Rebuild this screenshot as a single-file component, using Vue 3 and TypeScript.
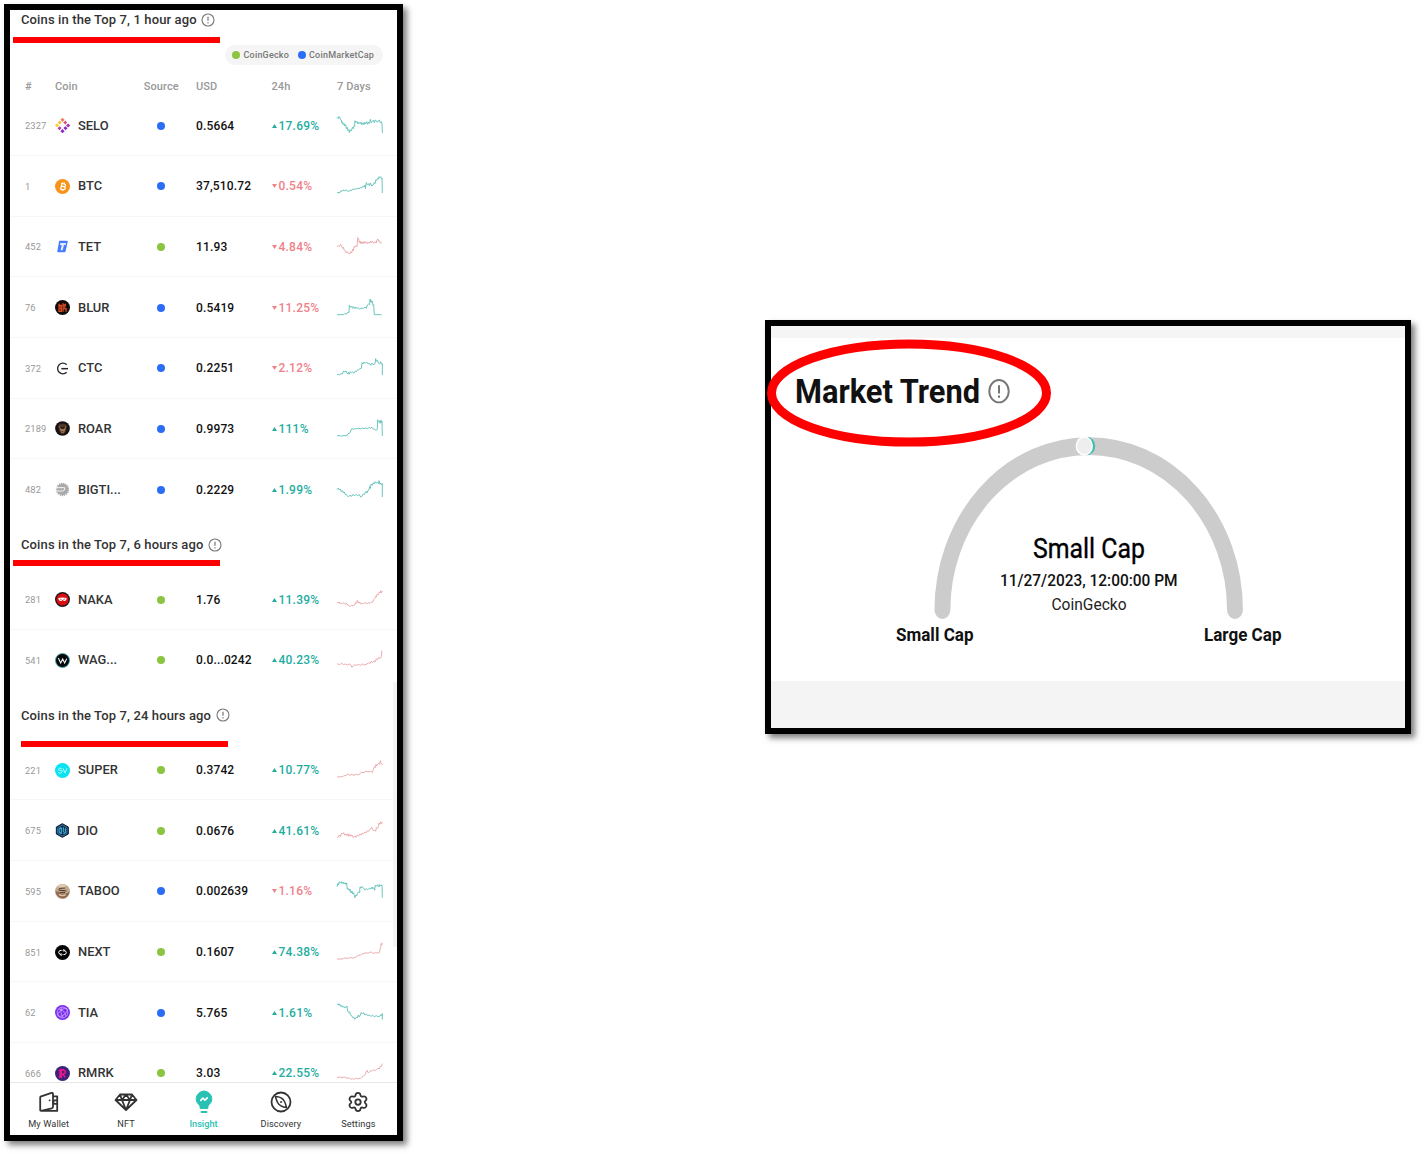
<script setup lang="ts">
interface Coin {
  rank: number
  name: string
  source: 'gecko' | 'cmc'
  usd: string
  change: string
  up: boolean
  trend: 'green' | 'red'
  points: string
}
interface Section {
  title: string
  coins: Coin[]
}

const coin = (
  rank: number, name: string, source: 'gecko' | 'cmc', usd: string, change: string,
  up: boolean, trend: 'green' | 'red', points: string,
): Coin => ({ rank, name, source, usd, change, up, trend, points })

const sections: Section[] = [
  {
    title: 'Coins in the Top 7, 1 hour ago',
    coins: [
      coin(2327, 'SELO', 'cmc', '0.5664', '17.69%', true, 'green', '0,4 3,8 5,2 8,3 10,10 13,12 14,20 17,18 18,26 21,22 23,30 26,26 28,38 31,34 33,44 36,40 37,50 40,42 43,45 46,34 49,38 51,29 53,31 54,14 57,20 60,16 63,24 66,19 69,23 72,18 75,26 78,20 81,26 83,19 86,24 89,17 92,25 95,18 98,22 100,10 103,20 106,17 109,13 112,20 114,12 118,14 121,19 124,14 127,12 130,20 133,17 135,24 136,51'),
      coin(1, 'BTC', 'cmc', '37,510.72', '0.54%', false, 'green', '0,50 9,50 12,44 15,46 18,42 23,44 28,42 33,46 38,45 40,42 45,43 48,39 55,40 60,37 66,38 70,35 74,36 77,31 82,32 84,27 85,38 88,20 91,26 94,23 97,29 100,21 104,30 108,27 112,20 114,23 116,12 119,14 121,7 124,9 126,2 128,5 131,2 133,8 135,6 136,51'),
      coin(452, 'TET', 'gecko', '11.93', '4.84%', false, 'red', '0,29 4,26 7,29 11,22 14,27 17,34 19,31 22,40 26,42 28,48 31,44 34,49 38,51 41,44 44,48 47,36 49,41 51,29 54,31 57,26 60,29 62,2 65,5 67,17 69,12 72,21 75,14 78,20 81,13 84,19 88,14 91,20 94,15 97,19 100,13 103,18 106,12 109,17 112,19 115,14 118,18 120,8 123,6 125,13 128,12 130,19 134,17'),
      coin(76, 'BLUR', 'cmc', '0.5419', '11.25%', false, 'green', '0,50 20,50 23,47 29,48 31,44 36,43 37,22 40,28 44,24 47,31 50,26 54,32 57,27 60,31 64,30 68,33 75,30 80,31 84,27 88,31 91,21 95,18 98,20 99,3 101,11 103,8 104,14 106,10 108,22 110,20 112,50 134,50'),
      coin(372, 'CTC', 'cmc', '0.2251', '2.12%', false, 'green', '0,51 4,48 7,51 12,47 16,48 20,39 24,42 27,39 31,47 34,43 36,49 40,41 43,45 47,42 51,46 55,39 58,41 61,36 65,35 69,32 73,31 75,14 78,18 81,12 85,16 89,12 94,18 98,17 101,22 104,15 108,20 111,19 114,17 116,2 118,10 121,7 124,15 128,18 131,11 134,18 136,17 136,51'),
      coin(2189, 'ROAR', 'cmc', '0.9973', '111%', true, 'green', '0,50 10,50 14,52 18,50 30,50 33,44 38,43 41,36 44,29 50,31 54,28 60,30 65,27 70,30 75,27 81,29 86,27 92,29 97,25 101,28 104,24 107,29 112,31 118,34 121,30 122,2 125,8 127,6 129,13 132,3 134,11 135,8 136,51'),
      coin(482, 'BIGTI...', 'cmc', '0.2229', '1.99%', true, 'green', '0,29 4,24 7,30 10,27 13,35 17,32 19,39 22,36 25,44 28,43 30,47 34,50 39,46 44,49 48,43 53,48 58,43 62,47 67,44 71,51 75,49 79,42 83,43 85,36 88,34 90,39 93,31 96,30 98,20 100,25 102,12 106,16 109,8 112,12 115,5 119,10 122,7 125,11 126,2 129,13 131,9 134,14 136,11 136,51'),
    ],
  },
  {
    title: 'Coins in the Top 7, 6 hours ago',
    coins: [
      coin(281, 'NAKA', 'gecko', '1.76', '11.39%', true, 'red', '0,36 4,39 7,36 9,41 12,38 16,42 21,38 25,43 29,40 32,45 36,46 39,50 43,46 48,47 53,45 56,37 59,40 61,31 64,38 68,36 70,42 75,39 80,42 85,37 89,42 94,38 99,40 103,36 107,37 110,29 113,26 115,20 118,21 120,13 124,14 127,6 129,9 131,2 133,9 136,3'),
      coin(541, 'WAG...', 'gecko', '0.0...0242', '40.23%', true, 'red', '0,41 7,44 14,40 19,44 25,42 31,45 37,42 41,44 44,51 49,49 53,44 58,46 64,43 70,46 77,42 83,45 90,42 95,38 99,41 102,34 107,37 111,33 115,35 118,26 122,29 125,22 130,25 133,20 134,3 136,2'),
    ],
  },
  {
    title: 'Coins in the Top 7, 24 hours ago',
    coins: [
      coin(221, 'SUPER', 'gecko', '0.3742', '10.77%', true, 'red', '0,51 16,50 20,48 27,46 33,42 38,46 44,43 50,46 58,43 63,45 68,41 74,37 81,38 87,33 93,36 100,34 106,37 109,29 112,20 115,23 117,13 119,18 122,13 126,9 128,13 130,2 132,8 134,10 136,15'),
      coin(675, 'DIO', 'gecko', '0.0676', '41.61%', true, 'red', '0,51 4,48 7,42 10,47 14,36 17,39 20,35 24,43 27,39 30,44 33,38 35,46 39,40 42,46 45,42 49,50 53,45 58,49 61,42 65,45 69,39 73,42 76,36 80,38 84,33 88,35 91,29 95,31 98,26 101,24 104,19 107,25 110,30 113,27 116,31 118,20 121,22 124,17 126,6 128,10 131,2 133,9 136,4'),
      coin(595, 'TABOO', 'cmc', '0.002639', '1.16%', false, 'green', '0,17 3,7 5,12 7,2 10,5 13,2 15,8 18,3 21,9 24,5 27,10 29,6 31,25 34,22 37,29 39,24 42,36 45,30 47,39 50,35 52,44 54,50 56,42 59,45 62,35 65,33 68,35 69,18 73,21 75,16 79,20 83,27 88,23 92,26 97,22 102,24 105,18 107,23 110,20 113,28 115,12 119,16 122,11 126,18 128,11 132,14 135,12 136,50'),
      coin(851, 'NEXT', 'gecko', '0.1607', '74.38%', true, 'red', '0,51 16,51 22,48 33,49 38,47 50,48 57,45 61,43 65,39 70,40 74,36 81,35 87,32 93,34 99,30 104,31 109,34 116,32 122,33 127,32 129,22 131,16 132,5 134,9 136,2'),
      coin(62, 'TIA', 'cmc', '5.765', '1.61%', true, 'green', '0,5 3,2 6,7 8,3 11,10 15,8 18,13 21,10 24,15 28,12 30,9 32,24 35,29 38,26 40,36 44,38 47,44 50,42 53,49 56,45 58,42 61,45 64,36 67,42 70,36 73,28 77,33 80,29 84,36 88,33 92,38 97,36 102,40 107,37 112,41 118,38 123,41 128,40 131,35 133,38 136,32 136,50'),
      coin(666, 'RMRK', 'gecko', '3.03', '22.55%', true, 'red', '0,44 8,42 15,44 22,42 30,46 36,44 41,49 46,47 51,49 56,45 60,48 65,46 70,47 74,43 78,41 81,37 84,35 87,28 90,22 93,29 98,27 102,22 105,25 110,20 115,23 119,19 123,16 127,18 130,10 133,11 135,4 136,2'),
    ],
  },
]

// Token logos on a 45-unit grid
const logos: Record<string, string> = {
  SELO: `<g transform="rotate(45 22.5 22.5)"><path fill="#f5d33b" d="M6 29h9v9H6z"/><path fill="#f5bd3d" d="M6 18h9v8H6z"/><path fill="#eb835a" d="M6 6h9v9H6z"/><path fill="#d25584" d="M18 6h8v9h-8z"/><path fill="#a934ad" d="M30 6h9v9h-9z"/><path fill="#8529c4" d="M30 18h9v8h-9z"/><path fill="#8d2bc5" d="M30 30h9v9h-9z"/><path fill="#b23cb4" d="M18 30h8v9h-8z"/></g>`,
  BTC: `<circle cx="22.5" cy="22.5" r="22.5" fill="#f7931a"/><g transform="rotate(13 22.5 22.5)"><path d="M16 14h9q6 0 6 4t-5 4q6 1 6 5t-7 4h-9M19 14v17M19 22h7M21 10v4M26 10v4M21 31v4M26 31v4" fill="none" stroke="#fff" stroke-width="3.4"/></g>`,
  TET: `<path d="M14 5h22q3 0 2 3l-6 28q-1 4-4 4H10q-4 0-3-4l5-28q0-3 2-3z" fill="#477bfa"/><path d="M16 12h17l-1 6h-5l-4 16h-6l3-16h-5z" fill="#e3edff"/>`,
  BLUR: `<circle cx="22.5" cy="22.5" r="22.5" fill="#120d0b"/><g fill="none" stroke="#d84a20" stroke-width="4"><path d="M12 11v10h7v-5h-5M24 10v11h7M12 25v9h7v-8h-6M24 35v-9h9v9M25 15h6M31 11v8"/></g>`,
  CTC: `<path d="M35 11A16 16 0 1 0 35 34" fill="none" stroke="#27272a" stroke-width="4"/><path d="M19 23h20" stroke="#27272a" stroke-width="4.5"/>`,
  ROAR: `<circle cx="22.5" cy="22.5" r="22" fill="#17110f"/><path d="M9 14l6-6h15l6 6-3 16-6 8h-9l-6-8z" fill="#4c3529"/><path d="M12 15l7 3 4 8 4-8 7-3-4 12-3 8h-8l-3-8z" fill="#a57c58"/><path d="M15 18l6 2-1 4zM30 18l-6 2 1 4zM20 31h5" fill="#17110f" stroke="#17110f" stroke-width="2"/>`,
  'BIGTI...': `<circle cx="22.5" cy="22.5" r="17" fill="#aaa"/><circle cx="22.5" cy="22.5" r="18" fill="none" stroke="#aaa" stroke-width="4" stroke-dasharray="4 2.5"/><path d="M2 17h19M5 27h18q6-1 6-6v-4H18" fill="none" stroke="#fff" stroke-width="2.600"/>`,
  NAKA: `<circle cx="22.5" cy="22.5" r="22.5" fill="#251819"/><circle cx="22.5" cy="22.5" r="18" fill="#dd0d13"/><path d="M10 18q12-3 25 0-1 10-8 9l-4-3-4 3q-8 1-9-9z" fill="#fff"/><path d="M15 21l5 2M30 21l-5 2" stroke="#dd0d13" stroke-width="2"/>`,
  'WAG...': `<circle cx="22.5" cy="22.5" r="21" fill="#06090c" stroke="#42a9b7" stroke-width="2.5"/><path d="M10 15l7 15 6-12 6 12 6-13" fill="none" stroke="#f4f4f4" stroke-width="3.2"/>`,
  SUPER: `<circle cx="22.5" cy="22.5" r="22.5" fill="#08e2f2"/><path d="M20 17q-9-4-10 1t8 4 0 8q-5 1-9-2M24 16l6 14 6-14" fill="none" stroke="#a9fff8" stroke-width="3"/>`,
  DIO: `<path d="M22 2l18 10v21L22 43 4 33V12z" fill="#13263f" stroke="#101b38" stroke-width="3"/><path d="M22 6l14 8v17l-14 8-14-8V14z" fill="none" stroke="#318bb6" stroke-width="2.5"/><path d="M19 14v17q-7-1-7-8t7-9M25 13v15M31 16v12l-6 4" fill="none" stroke="#3aa6d6" stroke-width="3.6"/>`,
  TABOO: `<circle cx="22.5" cy="22.5" r="22.5" fill="#c2a78b"/><path d="M8 5q13-9 25 0l-5 8H12z" fill="#dfcbb0"/><path d="M2 22l11 2 8 6 14-2 8-5q-2 13-12 18-9 4-19-1Q2 33 2 22z" fill="#8e6b55"/><path d="M12 13l18-1M10 18l24 3M15 26h15" stroke="#453229" stroke-width="3"/><path d="M12 31q10 7 20 1" stroke="#e3c4a8" stroke-width="4" fill="none"/>`,
  NEXT: `<circle cx="22.5" cy="22.5" r="22.5" fill="#050505"/><path d="M20 16q-8-1-9 6 1 7 8 7M18 25l3 4-4 4M25 29q8 1 9-6-1-7-8-7M27 20l-3-4 4-4" fill="none" stroke="#fff" stroke-width="3"/>`,
  TIA: `<circle cx="22.5" cy="22.5" r="22.5" fill="#7b2eee"/><g fill="none" stroke="#d9bdff" stroke-width="2"><circle cx="22.5" cy="22.5" r="16"/><ellipse cx="23" cy="22" rx="17" ry="8" transform="rotate(-38 23 22)"/><path d="M11 12q17 2 22 22M19 7q-5 15 5 31"/></g>`,
  RMRK: `<circle cx="22.5" cy="22.5" r="22.5" fill="#3a2376"/><path d="M15 34V13h9q7 0 7 5t-7 6H15M22 24l9 10M19 8v29M25 8v5M11 13h6M11 33h6" fill="none" stroke="#e6168c" stroke-width="4.5"/>`,
}

const tabs = ['My Wallet', 'NFT', 'Insight', 'Discovery', 'Settings']
</script>

<template>
  <main class="board">
    <section class="phone">
      <div class="list">
        <div v-for="(section, si) in sections" :key="section.title" class="group">
          <h3 class="heading" :class="{ first: si === 0 }">
            <span>{{ section.title }}</span>
            <svg class="info" viewBox="0 0 14 14">
              <circle cx="7" cy="7" r="6" fill="none" stroke="#777" stroke-width="1.1" />
              <path d="M7 3.8v4M7 9.3v1.1" stroke="#666" stroke-width="1.1" />
            </svg>
            <i class="underline"></i>
          </h3>
          <template v-if="si === 0">
            <div class="legend-line">
              <div class="legend">
                <span class="dot gecko"></span><span class="legend-name">CoinGecko</span>
                <span class="dot cmc"></span><span>CoinMarketCap</span>
              </div>
            </div>
            <div class="columns">
              <span>#</span><span>Coin</span><span class="source">Source</span>
              <span>USD</span><span>24h</span><span>7 Days</span>
            </div>
          </template>
          <div v-for="c in section.coins" :key="c.name" class="row">
            <span class="rank">{{ c.rank }}</span>
            <span class="coin" :class="{ tight: c.name === 'DIO' }">
              <svg class="logo" viewBox="0 0 45 45" v-html="logos[c.name]"></svg>
              <span>{{ c.name }}</span>
            </span>
            <span class="source"><i class="dot" :class="c.source"></i></span>
            <span class="usd">{{ c.usd }}</span>
            <span class="change" :class="c.up ? 'up' : 'down'">
              <svg class="arrow" viewBox="0 0 5 4">
                <path :d="c.up ? 'M0 4L2.5 0 5 4z' : 'M0 0h5L2.5 4z'" fill="currentColor" />
              </svg>{{ c.change }}
            </span>
            <svg class="spark" :class="c.trend" viewBox="0 0 138 60">
              <polyline :points="c.points" />
            </svg>
          </div>
        </div>
      </div>
      <i class="scrollbar"></i>
      <nav class="tabs">
        <div v-for="t in tabs" :key="t" class="tab" :class="{ active: t === 'Insight' }">
          <svg viewBox="0 0 24 24" fill="none" stroke="currentColor" stroke-width="1.8" stroke-linejoin="round" stroke-linecap="round">
            <template v-if="t === 'My Wallet'">
              <path d="M3.500 6.700l11-3.800c1-.3 1.500 .1 1.500 1v12.700c0 1-.4 1.500-1.300 1.800L4 20.800q-.8 0-.8-.9V7.500q0-.6.6-.8M4 20.900h16.200V6.300H16" />
              <path d="M20 10.300h-2.500q-1 0-1 1v1.600q0 1 1 1H20" />
              <circle cx="12.500" cy="10.300" r=".6" fill="currentColor" stroke-width=".5" />
            </template>
            <template v-else-if="t === 'NFT'">
              <path d="M6 4.500h12l4.500 5.500L12 20 1.500 10zM1.500 10h21M6 4.500l2 5.500 4-5.500 4 5.500 2-5.500M8 10l4 10 4-10" />
            </template>
            <template v-else-if="t === 'Insight'">
              <path d="M12 1.100a7.800 7.800 0 0 1 7.800 7.800c0 3-1.600 4.600-2.800 5.800-.9.900-1.100 2-1.100 3.700H8.100c0-1.700-.2-2.800-1.100-3.700-1.200-1.200-2.800-2.800-2.800-5.800A7.800 7.800 0 0 1 12 1.100z" fill="currentColor" stroke-width="1" />
              <path d="M9.500 22h5" stroke-width="2" />
              <path d="M8.800 10.300l2-2.100 2.200 2 2.300-2.300" stroke="#fff" stroke-width="1.700" />
            </template>
            <template v-else-if="t === 'Discovery'">
              <circle cx="12" cy="12" r="9.500" />
              <path d="M6.500 6.500c4 .1 7.500 2 9 5 .9 1.800 1.500 4 2 6-4-.4-7.200-2-9-5.200-1-1.800-1.600-3.800-2-5.800z" stroke-width="1.500" />
              <circle cx="12" cy="12" r=".7" fill="currentColor" stroke-width=".6" />
            </template>
            <template v-else>
              <path d="M9.300 5.200c.5-3.600 4.900-3.600 5.400 0 .3 1 1.200 1.500 2.200 1.100 3.400-1.300 5.500 2.500 2.700 4.700-.8.700-.8 1.500 0 2.200 2.800 2.200.7 6-2.700 4.700-1-.4-1.900.1-2.200 1.100-.5 3.600-4.900 3.600-5.400 0-.3-1-1.200-1.500-2.200-1.100-3.400 1.300-5.500-2.500-2.700-4.700.8-.7.8-1.500 0-2.200-2.800-2.200-.7-6 2.700-4.700 1 .4 1.900-.1 2.200-1.100z" transform="translate(.6 .6) scale(.95)" />
              <circle cx="12" cy="12.100" r="2.700" />
            </template>
          </svg>
          <span>{{ t }}</span>
        </div>
      </nav>
    </section>

    <section class="market">
      <div class="strip"></div>
      <header class="market-title">
        <svg width="220" height="50" viewBox="0 0 220 50">
          <text x="0" y="38.500" class="t-title" textLength="185" lengthAdjust="spacingAndGlyphs">Market Trend</text>
          <ellipse cx="204" cy="27.200" rx="9.700" ry="11.200" fill="none" stroke="#777" stroke-width="1.900" />
          <path d="M204 21.200v8.300M204 31.500v2.200" stroke="#666" stroke-width="1.800" />
        </svg>
      </header>
      <!-- Semicircular gauge with the reading in the middle -->
      <svg class="gauge" width="400" height="225" viewBox="888 430 400 225">
        <g transform="translate(1088.700 610) scale(.892 1)">
          <path d="M-164 0A164 164 0 0 1 164 0" fill="none" stroke="#ccc" stroke-width="17.800" stroke-linecap="round" />
        </g>
        <ellipse cx="1086.500" cy="446" rx="8.700" ry="9.200" fill="#3dbbb0" />
        <ellipse cx="1084.300" cy="446" rx="8.700" ry="9.700" fill="#fff" />
        <ellipse cx="1084.500" cy="446" rx="7.400" ry="8.200" fill="#eee" />
        <text x="1033" y="558.300" class="t-value" textLength="112" lengthAdjust="spacingAndGlyphs">Small Cap</text>
        <text x="1000" y="586" class="t-date" textLength="177.500" lengthAdjust="spacingAndGlyphs">11/27/2023, 12:00:00 PM</text>
        <text x="1051.500" y="610.300" class="t-source" textLength="75" lengthAdjust="spacingAndGlyphs">CoinGecko</text>
        <text x="896" y="641.300" class="t-end" textLength="77.500" lengthAdjust="spacingAndGlyphs">Small Cap</text>
        <text x="1204" y="641.300" class="t-end" textLength="77.500" lengthAdjust="spacingAndGlyphs">Large Cap</text>
      </svg>
      <div class="footer-strip"></div>
      <svg class="ring" width="284" height="108" viewBox="0 0 284 108">
        <ellipse cx="142" cy="54" rx="137.500" ry="49" fill="none" stroke="#f00" stroke-width="9" />
      </svg>
    </section>
  </main>
</template>

<style>
body { margin: 0; background: #fff; }
</style>

<style scoped>
.board {
  box-sizing: border-box;
  width: 1424px;
  height: 1154px;
  padding: 4px 13px 0 4px;
  display: flex;
  justify-content: space-between;
  align-items: flex-start;
  overflow: hidden;
  font-family: Roboto, "Liberation Sans", sans-serif;
}
.phone, .market {
  box-sizing: border-box;
  position: relative;
  border: 6px solid #000;
  background: #fff;
  box-shadow: 4px 4px 6px rgba(0, 0, 0, .5);
}
.phone {
  width: 399px;
  height: 1137px;
  display: flex;
  flex-direction: column;
}
.list { flex: 1; min-height: 0; overflow: hidden; }
.heading {
  position: relative;
  box-sizing: border-box;
  height: 49.300px;
  margin: 0;
  padding: 0 0 0 11px;
  display: flex;
  align-items: center;
  gap: 4.500px;
  color: #333;
  font-size: 13px;
  font-weight: 500;
  letter-spacing: .12px;
}
.heading.first { height: 20px; padding-bottom: 1px; }
.info { width: 14px; height: 14px; }
.underline {
  position: absolute;
  left: 3px;
  top: 40px;
  width: 207.200px;
  height: 6px;
  background: #f00;
}
.first .underline { top: 27px; }
.group:last-child .underline { left: 11px; top: 50.500px; }
.legend-line {
  height: 45px;
  padding: 15px 14px 0 0;
  box-sizing: border-box;
  display: flex;
  justify-content: flex-end;
  align-items: flex-start;
}
.legend {
  box-sizing: border-box;
  width: 158px;
  height: 20px;
  padding-left: 7px;
  border-radius: 10px;
  background: #f5f5f5;
  display: flex;
  align-items: center;
  gap: 3.500px;
  color: #777;
  font-size: 9px;
  font-weight: 500;
  letter-spacing: .2px;
}
.legend-name { margin-right: 5px; }
.dot { display: block; width: 8px; height: 8px; border-radius: 50%; }
.gecko { background: #8bc540; }
.cmc { background: #2b6df6; }
.columns, .row {
  box-sizing: border-box;
  padding-left: 15px;
  display: grid;
  grid-template-columns: 30px 85px 42.500px 13.500px 75.500px 65.500px 46px;
  align-items: center;
}
.columns {
  height: 20.300px;
  padding-top: 2px;
  color: #999;
  font-size: 11px;
  font-weight: 500;
  letter-spacing: .1px;
}
.columns > span:nth-child(4), .usd { grid-column: 5; }
.columns > .source { text-align: center; white-space: nowrap; }
.row > .source { display: flex; justify-content: center; }
.row {
  height: 60.660px;
  border-bottom: 1px solid #f7f7f7;
  padding-top: 1px;
  color: #111;
  font-size: 12px;
  font-weight: 500;
  letter-spacing: .15px;
}
.row:last-child { border-bottom-color: transparent; }
.rank { color: #999; font-size: 9.300px; font-weight: 400; letter-spacing: .1px; }
.coin { display: flex; align-items: center; gap: 8px; color: #333; font-size: 12.900px; letter-spacing: 0; }
.coin > span { margin-top: -1px; }
.coin.tight { gap: 7px; }
.logo { width: 15px; height: 15px; }
.change { display: flex; align-items: center; gap: 2px; letter-spacing: .23px; }
.arrow { width: 5px; height: 4px; }
.up { color: #24ad9f; }
.down { color: #ef8189; }
.spark { width: 46px; height: 20px; overflow: visible; fill: none; stroke-width: 2.600; }
.green { stroke: #55bdb5; }
.red { stroke: #e8a0a3; }
.scrollbar {
  position: absolute;
  right: 0;
  top: 672px;
  width: 4px;
  height: 265px;
  background: #f4f4f4;
}
.tabs {
  box-sizing: border-box;
  height: 53px;
  border-top: 1.500px solid #e6e6e6;
  display: flex;
  background: #fff;
}
.tab {
  flex: 1;
  padding-top: 7px;
  display: flex;
  flex-direction: column;
  align-items: center;
  gap: 3.500px;
  color: #333;
  font-size: 9.200px;
  letter-spacing: .1px;
  line-height: 12px;
}
.tab svg { width: 24px; height: 24px; flex: none; }
.tab.active { color: #28c1b3; font-weight: 500; letter-spacing: 0; }

.market {
  width: 646px;
  height: 414px;
  margin-top: 316px;
  display: flex;
  flex-direction: column;
}
.strip { height: 12px; background: #f5f5f5; }
.market-title { height: 92px; padding: 26px 0 0 24px; box-sizing: border-box; }
.market-title svg { display: block; }
.gauge { display: block; margin-left: 117px; }
.footer-strip { margin-top: auto; height: 47px; background: #f4f4f4; }
.ring { position: absolute; left: -4px; top: 12.500px; }
.t-title { font-size: 34px; font-weight: 700; fill: #111; }
.t-value { font-size: 27px; font-weight: 400; fill: #000; stroke: #000; stroke-width: .35px; }
.t-date { font-size: 16.500px; font-weight: 500; fill: #111; }
.t-source { font-size: 16.500px; font-weight: 400; fill: #222; }
.t-end { font-size: 18.700px; font-weight: 700; fill: #111; }
</style>
